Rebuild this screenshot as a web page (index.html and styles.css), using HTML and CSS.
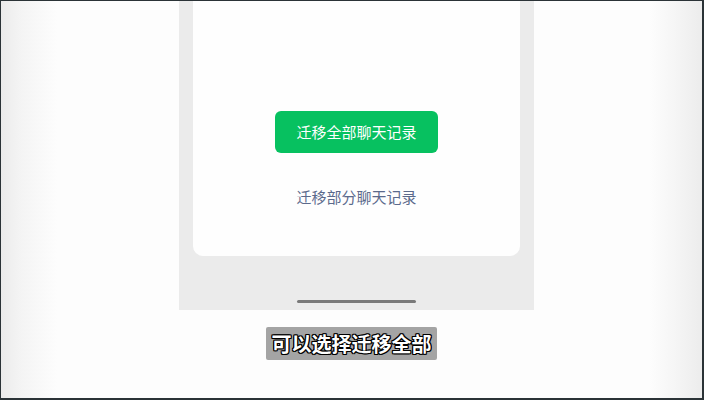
FILE: index.html
```html
<!DOCTYPE html>
<html lang="zh">
<head>
<meta charset="utf-8">
<link rel="stylesheet" href="styles.css">
</head>
<body>
<div class="screen">
  <div class="phone">
    <div class="card">
      <div class="btn-primary">迁移全部聊天记录</div>
      <div class="link">迁移部分聊天记录</div>
    </div>
    <div class="home-bar"></div>
  </div>
  <div class="subtitle">可以选择迁移全部</div>
</div>
</body>
</html>
```
FILE: styles.css
```css
html, body {
  margin: 0;
  padding: 0;
}
body {
  width: 704px;
  height: 400px;
  background: #2b3337;
  overflow: hidden;
  font-family: "Noto Sans CJK SC", "Noto Sans", sans-serif;
}
.screen {
  margin: 1px 2px 0 1px;
  width: 701px;
  height: 397px;
  background: linear-gradient(to right, #ebebeb 0px, #f4f4f4 20px, #fdfdfd 56px, #fdfdfd 648px, #f6f6f6 672px, #ececec 701px);
  display: flex;
  flex-direction: column;
}
.phone {
  margin-left: 178px;
  width: 327px;
  height: 309px;
  padding: 0 14px;
  background: #ebebeb;
  display: flex;
  flex-direction: column;
  align-items: center;
}
.card {
  width: 327px;
  height: 255px;
  background: #fefefe;
  border-radius: 0 0 10px 10px;
  display: flex;
  flex-direction: column;
  align-items: center;
}
.btn-primary {
  margin-top: 110px;
  width: 163px;
  height: 42px;
  border-radius: 6px;
  background: #07c160;
  color: #ffffff;
  font-size: 15px;
  line-height: 42px;
  text-align: center;
}
.link {
  margin-top: 33px;
  font-size: 15px;
  line-height: 22px;
  color: #5b6a8c;
  text-align: center;
}
.home-bar {
  margin-top: 44px;
  width: 119px;
  height: 3px;
  border-radius: 2px;
  background: #7a7a7a;
}
.subtitle {
  margin-top: 17px;
  margin-left: 265px;
  width: 171px;
  height: 33px;
  border-radius: 2px;
  background: #a4a4a4;
  color: #ffffff;
  font-size: 20px;
  font-weight: 700;
  line-height: 33px;
  text-align: center;
  letter-spacing: 0px;
  text-shadow: -1px -1px 0 #000, 1px -1px 0 #000, -1px 1px 0 #000, 1px 1px 0 #000, 0 1px 0 #000, 0 -1px 0 #000, 1px 0 0 #000, -1px 0 0 #000;
}
```
